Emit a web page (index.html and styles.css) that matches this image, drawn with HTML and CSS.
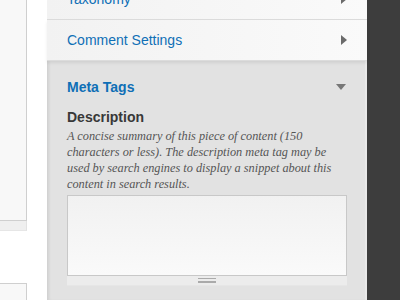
FILE: index.html
```html
<!DOCTYPE html>
<html lang="en">
<head>
    <meta charset="UTF-8">
    <title>Meta Tags</title>
    <link rel="stylesheet" href="styles.css">
</head>
<body>
    <div class="page">
        <div class="main">
            <div class="box box-first"></div>
            <div class="box-grip"></div>
            <div class="box box-second"></div>
        </div>

        <div class="panel">
            <div class="row">
                <span class="row-title">Taxonomy</span>
                <span class="arrow-right"></span>
            </div>
            <div class="row">
                <span class="row-title">Comment Settings</span>
                <span class="arrow-right"></span>
            </div>

            <div class="section">
                <div class="section-head">
                    <span class="section-title">Meta Tags</span>
                    <span class="arrow-down"></span>
                </div>
                <label class="field-label" for="description">Description</label>
                <p class="field-help">A concise summary of this piece of content (150 characters or less). The description meta tag may be used by search engines to display a snippet about this content in search results.</p>
                <textarea id="description" class="field-input"></textarea>
                <div class="grip"><span class="grip-lines"></span></div>
            </div>
        </div>

        <div class="sidebar"></div>
    </div>
</body>
</html>
```

FILE: styles.css
```css
body {
    margin: 0;
    background-color: #fff;
    font-family: "Liberation Sans", Arial, sans-serif;
}

.page {
    display: flex;
    width: 400px;
    height: 300px;
    overflow: hidden;
}

/* left edge of the main form, mostly off screen */
.main {
    width: 27px;
    flex-shrink: 0;
    display: flex;
    flex-direction: column;
}

.box {
    background-color: #f8f8f8;
    border: 1px solid #cfcfcf;
    border-left: none;
}

.box-first {
    height: 220px;
    border-top: none;
}

.box-grip {
    height: 9px;
    background-color: #efefef;
    border-right: 1px solid #e2e2e2;
    border-bottom: 1px solid #e6e6e6;
}

.box-second {
    margin-top: 52px;
    flex: 1;
    border-bottom: none;
}

.panel {
    width: 320px;
    margin-left: 20px;
    flex-shrink: 0;
    background-color: #e2e2e2;
    display: flex;
    flex-direction: column;
    box-shadow: inset 3px 0 3px -1px rgba(0, 0, 0, 0.08), inset -2px 0 0 #e9e9e9;
}

.row {
    height: 40px;
    display: flex;
    align-items: center;
    justify-content: space-between;
    padding: 0 20px 0 20px;
    background: linear-gradient(to right, #f2f2f2, #fafafa);
    border-bottom: 1px solid #dcdcdc;
}

.row:first-child {
    margin-top: -21px;
}

.row:nth-child(2) {
    box-shadow: 0 2px 3px rgba(0, 0, 0, 0.08);
    position: relative;
}

.row-title {
    font-size: 14px;
    color: #0f6fb6;
}

.arrow-right {
    width: 0;
    height: 0;
    border-top: 5px solid transparent;
    border-bottom: 5px solid transparent;
    border-left: 6px solid #6b6b6b;
}

.section {
    padding: 0 20px;
}

.section-head {
    height: 44px;
    padding-top: 4px;
    display: flex;
    align-items: center;
    justify-content: space-between;
}

.section-title {
    font-size: 14px;
    font-weight: bold;
    color: #0f6fb6;
}

.arrow-down {
    width: 0;
    height: 0;
    margin-right: 1px;
    border-left: 5px solid transparent;
    border-right: 5px solid transparent;
    border-top: 6px solid #777;
}

.field-label {
    display: block;
    font-size: 14px;
    font-weight: bold;
    color: #383838;
    line-height: 16px;
}

.field-help {
    width: 272px;
    margin: 3px 0 0 0;
    font-family: "Liberation Serif", "Times New Roman", serif;
    font-style: italic;
    font-size: 12.3px;
    line-height: 16px;
    color: #555;
}

.field-input {
    display: block;
    box-sizing: border-box;
    width: 280px;
    height: 81px;
    margin: 3px 0 0 0;
    border: 1px solid #c8c8c8;
    background: linear-gradient(to bottom, #f1f1f1, #fafafa);
    resize: none;
}

.grip {
    width: 280px;
    height: 9px;
    background-color: #ececec;
    display: flex;
    justify-content: center;
    align-items: center;
    box-shadow: 0 1px 0 #e6e6e6;
}

.grip-lines {
    width: 18px;
    height: 5px;
    border-top: 1px solid #aaa;
    border-bottom: 1px solid #aaa;
    background: linear-gradient(to bottom, transparent 2px, #aaa 2px, #aaa 3px, transparent 3px);
    box-sizing: border-box;
}

.sidebar {
    flex: 1;
    background-color: #3d3d3d;
}
```
